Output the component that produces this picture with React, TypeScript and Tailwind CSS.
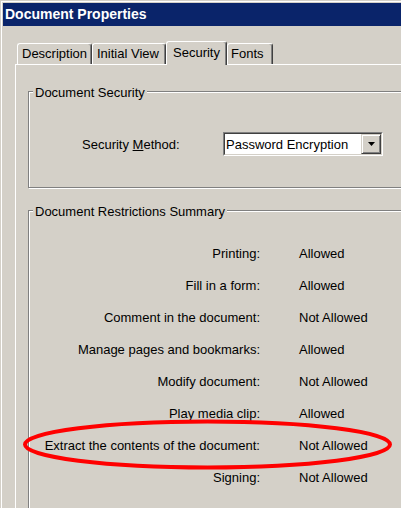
import React from "react";

const rows: [string, string][] = [
  ["Printing:", "Allowed"],
  ["Fill in a form:", "Allowed"],
  ["Comment in the document:", "Not Allowed"],
  ["Manage pages and bookmarks:", "Allowed"],
  ["Modify document:", "Not Allowed"],
  ["Play media clip:", "Allowed"],
  ["Extract the contents of the document:", "Not Allowed"],
  ["Signing:", "Not Allowed"],
];

function Tab({ label, selected, className }: { label: string; selected?: boolean; className: string }) {
  return (
    <div
      className={
        selected
          ? "relative z-10 -mb-px h-[24px] shrink-0 rounded-t-[3px] border-l border-t border-r border-white border-r-[#404040] bg-[#d4d0c8] pt-[3px] leading-[15px] shadow-[inset_-1px_0_0_#808080] " + className
          : "h-[21px] shrink-0 rounded-t-[3px] border-l border-t border-r border-white border-r-[#404040] bg-[#d4d0c8] pt-[2px] leading-[15px] shadow-[inset_-1px_0_0_#808080] " + className
      }
    >
      {label}
    </div>
  );
}

export default function App() {
  return (
    <div className="relative h-[508px] w-[401px] overflow-hidden bg-[#d4d0c8] font-['Liberation_Sans',Arial,sans-serif] text-[13px] leading-[15px] text-black">
      <div className="pl-px pt-px">
        <div className="border-l border-t border-white pl-px pt-px">
          {/* Title bar */}
          <div className="flex h-[23px] items-center bg-[#0a246a] pl-[2px] text-[14px] font-bold text-white">
            Document Properties
          </div>

          {/* Tabs + panel */}
          <div className="ml-[12px] mt-[15px] w-[420px]">
            <div className="flex h-[23px] items-end pl-[2px]">
              <Tab label="Description" className="w-[75px] pl-[4px]" />
              <Tab label="Initial View" className="w-[74px] pl-[4px]" />
              <Tab label="Security" selected className="w-[61px] pl-[6px]" />
              <Tab label="Fonts" className="w-[46px] pl-[3px]" />
            </div>
            <div className="h-[460px] border-l border-t border-white pl-[12px] pt-[26px]">
              {/* Document Security group */}
              <div className="relative h-[97px] w-[390px] border border-[#808080] shadow-[inset_1px_1px_0_#fff,1px_1px_0_#fff]">
                <div className="absolute -top-[7px] left-[4px] bg-[#d4d0c8] px-[2px]">Document Security</div>
                <div className="mt-[40px] flex items-center pl-[53px]">
                  <div className="w-[141px]">
                    Security <span className="underline">M</span>ethod:
                  </div>
                  <div className="h-[24px] w-[160px] border border-b-white border-l-[#808080] border-r-white border-t-[#808080]">
                    <div className="flex h-full items-center border border-b-[#d4d0c8] border-l-[#404040] border-r-[#d4d0c8] border-t-[#404040] bg-white">
                      <div className="flex-1 pl-[1px]">Password Encryption</div>
                      <div className="flex h-full w-[20px] items-center justify-center border border-b-[#404040] border-l-[#d4d0c8] border-r-[#404040] border-t-[#d4d0c8] bg-[#d4d0c8] shadow-[inset_1px_1px_0_#fff,inset_-1px_-1px_0_#808080]">
                        <svg width="7" height="4" viewBox="0 0 7 4">
                          <path d="M0 0H7L3.5 4Z" fill="#000" />
                        </svg>
                      </div>
                    </div>
                  </div>
                </div>
              </div>

              {/* Document Restrictions Summary group */}
              <div className="relative mt-[22px] h-[340px] w-[390px] border border-[#808080] pt-[26px] shadow-[inset_1px_1px_0_#fff,1px_1px_0_#fff]">
                <div className="absolute -top-[7px] left-[4px] bg-[#d4d0c8] px-[2px]">Document Restrictions Summary</div>
                {rows.map(([label, value]) => (
                  <div key={label} className="flex h-[32px] items-center">
                    <div className="w-[231px] text-right">{label}</div>
                    <div className="ml-[39px]">{value}</div>
                  </div>
                ))}
              </div>
            </div>
          </div>
        </div>
      </div>

      {/* Red annotation ellipse */}
      <svg className="pointer-events-none absolute left-0 top-0" width="401" height="508" viewBox="0 0 401 508">
        <ellipse cx="207.5" cy="444.5" rx="182.5" ry="23" fill="none" stroke="#ff0000" strokeWidth="4" />
      </svg>
    </div>
  );
}
